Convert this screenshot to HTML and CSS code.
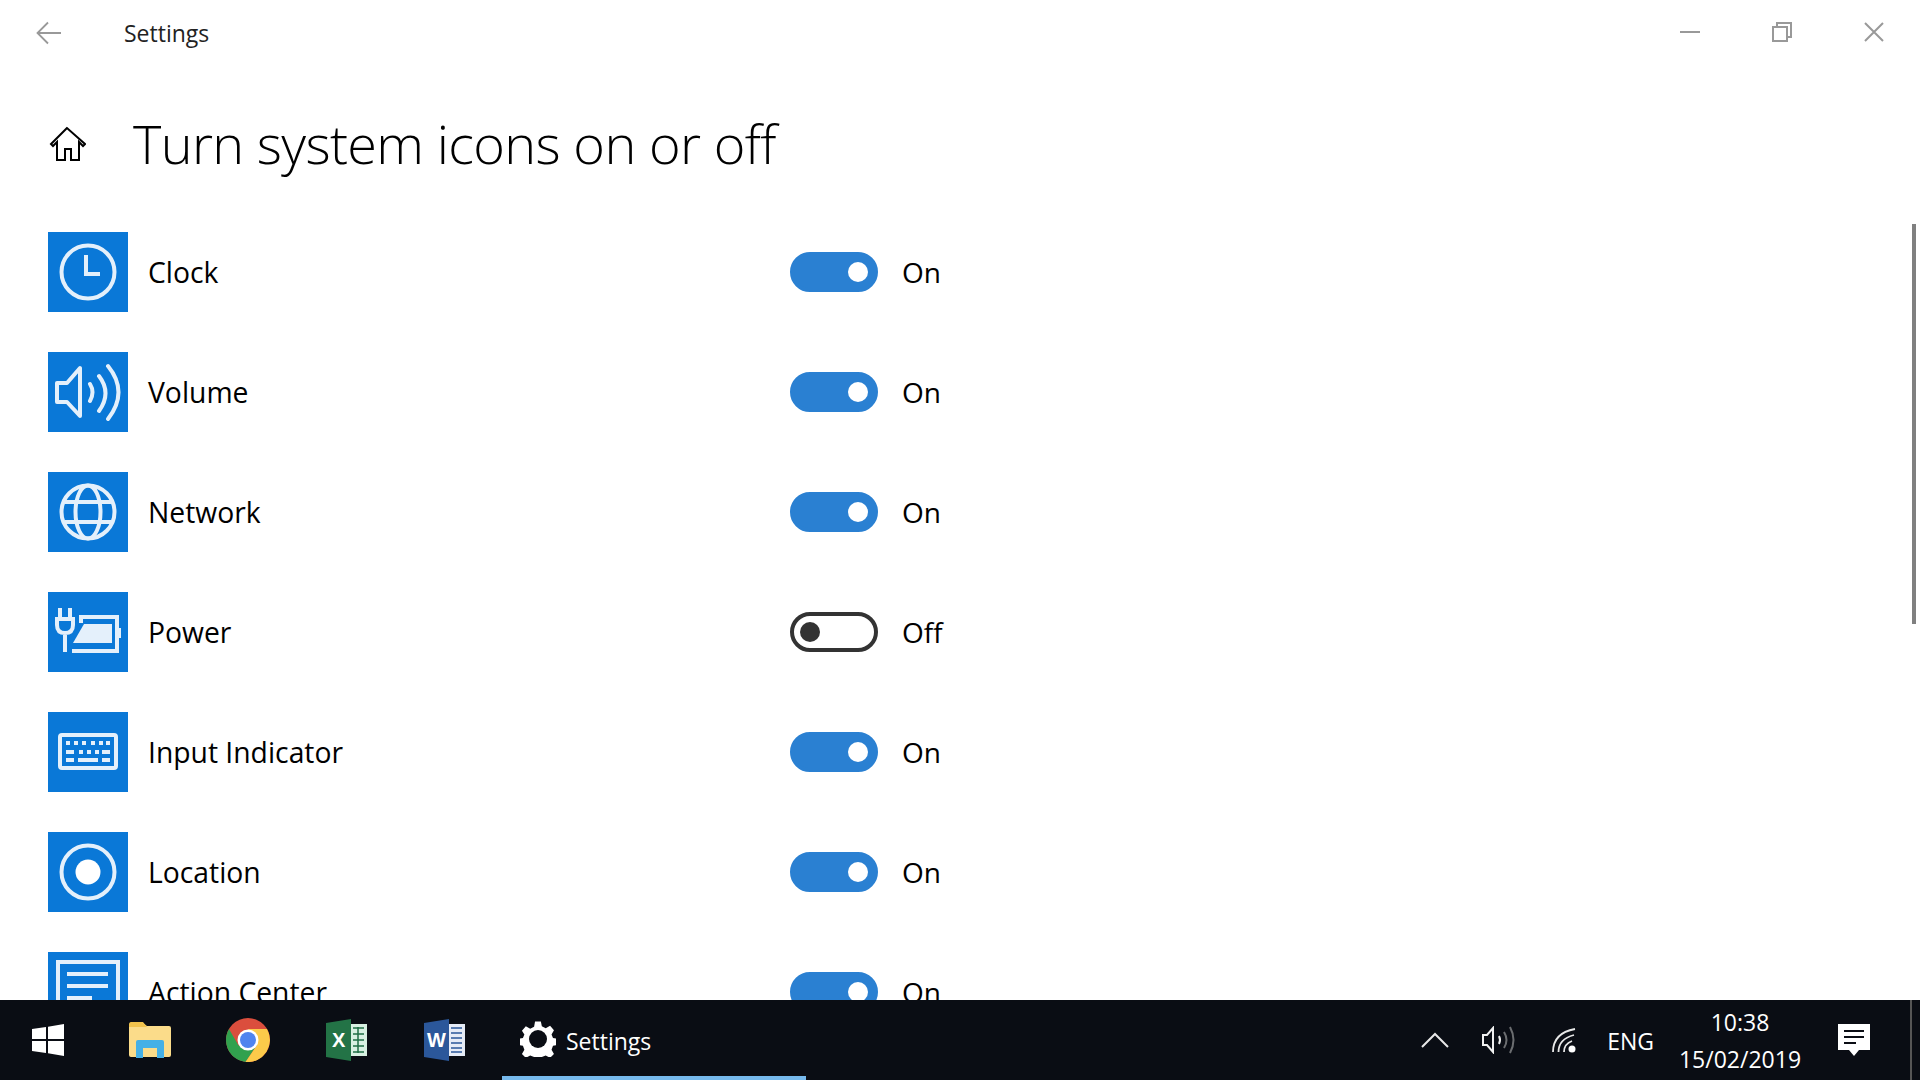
FILE: index.html
```html
<!DOCTYPE html>
<html lang="en">
<head>
  <meta charset="UTF-8" />
  <title>Settings</title>
  <link rel="stylesheet" href="styles.css">
</head>
<body>
  <div class="window">
    <header class="titlebar">
      <svg class="back" width="26" height="24" viewBox="0 0 26 24"><path d="M25 12H2M12 1.500 1.500 12 12 22.500" fill="none" stroke="#999" stroke-width="1.800"/></svg>
      <span class="title">Settings</span>
      <div class="controls">
        <svg width="92" height="66" viewBox="0 0 92 66"><path d="M36 32h20" stroke="#999" stroke-width="2"/></svg>
        <svg width="92" height="66" viewBox="0 0 92 66"><path d="M37 27h14v14H37zM41 27v-4h14v14h-4" fill="none" stroke="#999" stroke-width="2"/></svg>
        <svg width="92" height="66" viewBox="0 0 92 66"><path d="M37 23l18 18M55 23 37 41" stroke="#999" stroke-width="2"/></svg>
      </div>
    </header>

    <div class="heading">
      <svg class="home" width="38" height="38" viewBox="0 0 38 38"><path d="M19 2 3 18l2 2 4-4v18h8V23h6v11h8V16l4 4 2-2z" fill="none" stroke="#000" stroke-width="2"/></svg>
      <h1>Turn system icons on or off</h1>
    </div>

    <ul class="rows">
      <li class="row">
        <span class="tile"><svg width="80" height="80" viewBox="0 0 80 80"><g fill="none" stroke="#e4f0fb" stroke-width="4"><circle cx="40" cy="40" r="26.500"/><path d="M38 23v19h14"/></g></svg></span>
        <span class="name">Clock</span>
        <span class="toggle on"></span><span class="state">On</span>
      </li>
      <li class="row">
        <span class="tile"><svg width="80" height="80" viewBox="0 0 80 80"><g fill="none" stroke="#e4f0fb" stroke-width="4" stroke-linecap="round"><path d="M32 16v48L19 50H9V31h10z" stroke-linejoin="round"/><path d="M42 32q5 8 0 17M51 24q13 17 0 35M60 14q21 26 0 53"/></g></svg></span>
        <span class="name">Volume</span>
        <span class="toggle on"></span><span class="state">On</span>
      </li>
      <li class="row">
        <span class="tile"><svg width="80" height="80" viewBox="0 0 80 80"><g fill="none" stroke="#e4f0fb" stroke-width="4"><circle cx="40" cy="40" r="26.500"/><ellipse cx="40" cy="40" rx="12.500" ry="26.500"/><path d="M17 30h46M17 50h46"/></g></svg></span>
        <span class="name">Network</span>
        <span class="toggle on"></span><span class="state">On</span>
      </li>
      <li class="row">
        <span class="tile"><svg width="80" height="80" viewBox="0 0 80 80"><g fill="none" stroke="#e4f0fb" stroke-width="4"><path d="M12 16v10M22 16v10M9 27h16v6q0 8-8 8t-8-8zM17 41v19"/><path d="M33 31v-6h36v34H24"/></g><path d="M36 32h28v19H25z" fill="#e4f0fb"/><path d="M70 36h3v10h-3z" fill="#e4f0fb"/></svg></span>
        <span class="name">Power</span>
        <span class="toggle"></span><span class="state">Off</span>
      </li>
      <li class="row">
        <span class="tile"><svg width="80" height="80" viewBox="0 0 80 80"><rect x="12" y="23" width="56" height="33" rx="2" fill="none" stroke="#e4f0fb" stroke-width="4"/><path d="M18 31h4M26 31h4M34 31h4M43 31h4M51 31h4M58 31h4M18 40h8M31 40h4M39 40h4M47 40h4M54 40h8M18 48h8M30 48h20M54 48h8" stroke="#e4f0fb" stroke-width="4"/></svg></span>
        <span class="name">Input Indicator</span>
        <span class="toggle on"></span><span class="state">On</span>
      </li>
      <li class="row">
        <span class="tile"><svg width="80" height="80" viewBox="0 0 80 80"><circle cx="40" cy="40" r="26.500" fill="none" stroke="#e4f0fb" stroke-width="4"/><circle cx="40" cy="40" r="12.500" fill="#fff"/></svg></span>
        <span class="name">Location</span>
        <span class="toggle on"></span><span class="state">On</span>
      </li>
      <li class="row">
        <span class="tile"><svg width="80" height="80" viewBox="0 0 80 80"><path d="M10 10h60v60H10z" fill="none" stroke="#e4f0fb" stroke-width="4"/><path d="M19 22h41M19 34h41M19 46h25" stroke="#e4f0fb" stroke-width="4"/></svg></span>
        <span class="name">Action Center</span>
        <span class="toggle on"></span><span class="state">On</span>
      </li>
    </ul>
    <div class="scrollbar"><div class="thumb"></div></div>
  </div>

  <footer class="taskbar">
    <div class="task start"><svg width="32" height="32" viewBox="0 0 32 32"><path d="M0 5l14-2v12H0zM16 2.700 32 0v15H16zM0 17h14v12L0 27zM16 17h16v15l-16-2.700z" fill="#fff"/></svg></div>
    <div class="task"><svg width="42" height="36" viewBox="0 0 42 36"><path d="M0 3q0-2 2-2h12l4 3h22q2 0 2 2v27q0 2-2 2H2q-2 0-2-2z" fill="#fbdc8a"/><path d="M0 5h18l-4-5H2Q0 0 0 3z" fill="#f1c24c"/><path d="M7 36V20q0-2 2-2h24q2 0 2 2v16h-7v-10H14v10z" fill="#45b0e6"/></svg></div>
    <div class="task"><svg width="44" height="44" viewBox="0 0 44 44"><circle cx="22" cy="22" r="22" fill="#db4e3d"/><path d="M3 11 12.500 27.500 31 27 19.500 43.900A22 22 0 0 1 3 11z" fill="#31a14e"/><path d="M22 11H41A22 22 0 0 1 19.500 43.900L31 27z" fill="#fcca4a"/><circle cx="22" cy="22" r="10.500" fill="#fff"/><circle cx="22" cy="22" r="8" fill="#5084ee"/></svg></div>
    <div class="task"><svg width="41" height="42" viewBox="0 0 41 42"><path d="M24 5h17v32H24z" fill="#d8f0e2"/><path d="M27 9h11M27 15h11M27 21h11M27 27h11M27 33h11M32 8v26" stroke="#1f6e46" stroke-width="1.500"/><path d="M0 4 25 0v42L0 38z" fill="#237346"/><text class="office" x="6" y="28">X</text></svg></div>
    <div class="task"><svg width="41" height="42" viewBox="0 0 41 42"><path d="M24 5h17v32H24z" fill="#e6ecf7"/><path d="M27 9h11M27 14h11M27 19h11M27 24h11M27 29h11M27 33h11" stroke="#2b579a" stroke-width="1.500"/><path d="M0 4 25 0v42L0 38z" fill="#2b579a"/><text class="office" x="3" y="28">W</text></svg></div>
    <div class="task app">
      <svg class="gear" width="36" height="36" viewBox="0 0 36 36"><path d="M15 0h6l1 5 4 2 4.500-2.500 4 4.500-2.500 4.500 1.500 3.500 5 1v6l-5 1-1.500 4 2.500 4.500-4 4-4.500-2.500-4 1.500-1 5h-6l-1-5-4-1.500-4.500 2.500-4-4 2.500-4.500-1.500-4-5-1v-6l5-1 1.500-3.500L1.500 9.500l4-4.500L10 7.500l4-2z" transform="translate(0.500 0.500) scale(.97)" fill="#fff"/><circle cx="18" cy="18" r="9" fill="#0a0d14"/></svg>
      <span class="app-name">Settings</span>
    </div>
    <div class="tray">
      <svg width="30" height="20" viewBox="0 0 30 20"><path d="M2 17 15 4l13 13" fill="none" stroke="#e8e8e8" stroke-width="2"/></svg>
      <svg class="tray-vol" width="34" height="28" viewBox="0 0 34 28"><path d="M11 2v24l-6-7H1V9h4z" fill="none" stroke="#f0f0f0" stroke-width="2"/><path d="M17 10q2 4 0 8" fill="none" stroke="#f0f0f0" stroke-width="2"/><path d="M22 6q5 8 0 16M28 1q7 13 0 26" fill="none" stroke="#6b6d70" stroke-width="2"/></svg>
      <svg class="tray-net" width="26" height="26" viewBox="0 0 26 26"><g fill="none" stroke="#e8e8e8" stroke-width="1.800"><path d="M2 25Q2 6 24 2"/><path d="M7.500 25Q7.500 12 23 8"/><path d="M13 25Q13 17 21 14"/></g><circle cx="21" cy="22" r="3.500" fill="#fff"/></svg>
      <span class="lang">ENG</span>
      <div class="clock"><span>10:38</span><span>15/02/2019</span></div>
      <svg class="notes" width="32" height="32" viewBox="0 0 32 32"><path d="M0 0h32v26H21l-5 6-5-6H0z" fill="#fff"/><path d="M6 7h20M6 13h20M6 19h12" stroke="#0a0d14" stroke-width="2"/></svg>
      <div class="peek"></div>
    </div>
  </footer>
</body>
</html>
```

FILE: styles.css
```css
html, body {
  margin: 0;
  height: 100%;
  overflow: hidden;
}
body {
  display: flex;
  flex-direction: column;
  font-family: "Open Sans", "Noto Sans", sans-serif;
  background: #fff;
  color: #000;
}
.window {
  position: relative;
  height: 1000px;
  overflow: hidden;
}
.titlebar {
  display: flex;
  align-items: center;
  height: 66px;
  padding-left: 36px;
}
.back {
  margin-right: 62px;
}
.title {
  font-size: 23px;
  color: #222;
}
.controls {
  display: flex;
  margin-left: auto;
}
.heading {
  display: flex;
  align-items: center;
  height: 112px;
  margin-top: 21px;
  padding-left: 48px;
}
.home {
  margin: 4px 47px 0 0;
}
h1 {
  margin: 0;
  font-size: 54px;
  font-weight: 300;
  letter-spacing: -0.66px;
}
.rows {
  list-style: none;
  margin: 33px 0 0;
  padding: 0 0 0 48px;
}
.row {
  display: flex;
  align-items: center;
  height: 80px;
  margin-bottom: 40px;
}
.tile {
  width: 80px;
  height: 80px;
  background: #0a78d7;
}
.tile svg {
  display: block;
}
.name {
  width: 642px;
  margin-left: 20px;
  padding-bottom: 1px;
  font-size: 28.3px;
}
.toggle {
  position: relative;
  box-sizing: border-box;
  width: 88px;
  height: 40px;
  border: 4px solid #333;
  border-radius: 20px;
  background: #fff;
}
.toggle::after {
  content: "";
  position: absolute;
  left: 6px;
  top: 6px;
  width: 20px;
  height: 20px;
  border-radius: 50%;
  background: #333;
}
.toggle.on {
  border-color: #2a80d2;
  background: #2a80d2;
}
.toggle.on::after {
  left: 54px;
  background: #fff;
}
.state {
  margin-left: 24px;
  font-size: 28px;
}
.scrollbar {
  position: absolute;
  top: 0;
  right: 4px;
  width: 4px;
  height: 100%;
}
.thumb {
  height: 400px;
  margin-top: 224px;
  background: #808080;
}
.taskbar {
  display: flex;
  align-items: center;
  height: 80px;
  background: #0a0d14;
  color: #fff;
}
.task {
  display: flex;
  align-items: center;
  justify-content: center;
  width: 98px;
  height: 80px;
  flex: none;
}
.start {
  width: 96px;
  margin-right: 5px;
}
.task.app {
  box-sizing: border-box;
  justify-content: flex-start;
  gap: 10px;
  width: 304px;
  margin-left: 9px;
  padding-left: 18px;
  border-bottom: 4px solid #76b9ed;
  font-size: 23px;
}
.gear {
  margin-top: 2px;
}
.app-name {
  margin-top: 6px;
}
.office {
  font-family: "Liberation Sans", sans-serif;
  font-size: 20px;
  font-weight: 700;
  fill: #fff;
}
.tray {
  display: flex;
  align-items: center;
  height: 80px;
  margin-left: auto;
  padding-right: 8px;
  font-size: 23px;
}
.tray-vol {
  margin-left: 32px;
}
.tray-net {
  margin-left: 35px;
}
.lang {
  margin: 2px 0 0 30px;
}
.clock {
  display: flex;
  flex-direction: column;
  align-items: center;
  width: 170px;
  margin-left: 1px;
  padding-top: 2px;
  line-height: 37px;
}
.notes {
  margin-left: 13px;
}
.peek {
  width: 2px;
  height: 80px;
  margin-left: 40px;
  background: #555;
}
```
